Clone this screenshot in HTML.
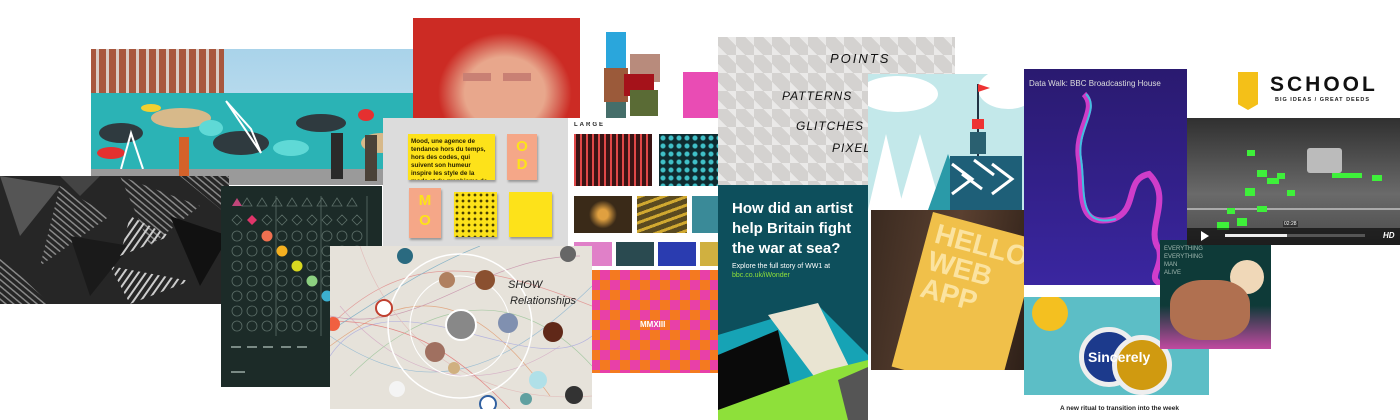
<!DOCTYPE html>
<html><head><meta charset="utf-8"><style>
*{margin:0;padding:0;box-sizing:border-box}
body{width:1400px;height:420px;background:#fff;position:relative;overflow:hidden;font-family:"Liberation Sans",sans-serif}
.a{position:absolute;overflow:hidden}
</style></head><body>

<!-- Mural -->
<div class="a" style="left:91px;top:49px;width:322px;height:136px;background:linear-gradient(#a9d3ea,#cfe6f3)">
  <div class="a" style="left:0;top:0;width:133px;height:48px;background:#a8573e;background-image:repeating-linear-gradient(90deg,transparent 0 5px,#d9cbc4 5px 8px,transparent 8px 10px),repeating-linear-gradient(0deg,transparent 0 5px,#a8573e 5px 10px)"></div>
  <div class="a" style="left:0;top:44px;width:322px;height:76px;background:#2bb3b5">
    <svg width="322" height="76">
      <ellipse cx="30" cy="40" rx="22" ry="10" fill="#2f3a3f"/><ellipse cx="90" cy="25" rx="30" ry="10" fill="#d7b98a"/>
      <ellipse cx="150" cy="50" rx="28" ry="12" fill="#2f3a3f"/><ellipse cx="230" cy="30" rx="25" ry="9" fill="#2f3a3f"/>
      <ellipse cx="290" cy="50" rx="20" ry="10" fill="#d7b98a"/><ellipse cx="20" cy="60" rx="14" ry="6" fill="#e53030"/>
      <ellipse cx="275" cy="22" rx="8" ry="6" fill="#e53030"/><ellipse cx="120" cy="35" rx="12" ry="8" fill="#5fd9d6"/>
      <ellipse cx="200" cy="55" rx="18" ry="8" fill="#5fd9d6"/><ellipse cx="60" cy="15" rx="10" ry="4" fill="#f2d030"/>
      <polyline points="135,8 170,60 160,36 135,8" stroke="#fff" fill="none" stroke-width="2"/>
      <polyline points="30,76 40,40 52,76" stroke="#fff" fill="none" stroke-width="2"/>
    </svg>
  </div>
  <div class="a" style="left:0;top:120px;width:322px;height:16px;background:#9a9a9a"></div>
  <div class="a" style="left:88px;top:88px;width:10px;height:42px;background:#d4622a"></div>
  <div class="a" style="left:240px;top:84px;width:12px;height:46px;background:#2a2a2a"></div>
  <div class="a" style="left:274px;top:86px;width:12px;height:46px;background:#4a4238"></div>
</div>

<!-- Red face -->
<div class="a" style="left:413px;top:18px;width:167px;height:100px;background:radial-gradient(ellipse 40% 60% at 55% 75%,#e8a78c 0 60%,#d86a5a 80%,#cc2b24 100%)">
  <div class="a" style="left:50px;top:55px;width:28px;height:8px;background:#c98074"></div>
  <div class="a" style="left:90px;top:55px;width:28px;height:8px;background:#c98074"></div>
</div>
<!-- SEEG letters -->
<div class="a" style="left:580px;top:18px;width:103px;height:100px;background:#fff">
  <div class="a" style="left:26px;top:14px;width:20px;height:36px;background:#2aa6dc"></div>
  <div class="a" style="left:50px;top:36px;width:30px;height:28px;background:#b88b7c"></div>
  <div class="a" style="left:24px;top:50px;width:24px;height:34px;background:#9b5a3a"></div>
  <div class="a" style="left:44px;top:56px;width:30px;height:22px;background:#a5121a"></div>
  <div class="a" style="left:50px;top:72px;width:28px;height:26px;background:#5a6b35"></div>
  <div class="a" style="left:26px;top:84px;width:20px;height:16px;background:#456e6a"></div>
</div>
<div class="a" style="left:683px;top:72px;width:35px;height:48px;background:#e94cb4"></div>

<!-- Black triangles -->
<div class="a" style="left:0;top:176px;width:229px;height:128px;background:#262626">
  <svg width="229" height="128">
    <defs><pattern id="st" width="6" height="6" patternUnits="userSpaceOnUse" patternTransform="rotate(35)"><rect width="2" height="6" fill="#ccc"/></pattern>
    <pattern id="st2" width="5" height="5" patternUnits="userSpaceOnUse" patternTransform="rotate(-50)"><rect width="1.5" height="5" fill="#888"/></pattern></defs>
    <polygon points="0,0 60,10 20,60" fill="#555"/><polygon points="60,10 110,40 40,90" fill="url(#st2)"/>
    <polygon points="120,0 200,30 150,70" fill="url(#st2)"/><polygon points="110,90 190,105 130,128" fill="url(#st)"/>
    <polygon points="170,40 229,60 200,110" fill="#111"/><polygon points="0,80 50,128 0,128" fill="url(#st2)"/>
    <polygon points="70,60 130,70 90,120" fill="#1a1a1a"/><polygon points="180,0 229,0 229,40" fill="url(#st2)"/>
    <polygon points="130,40 170,60 120,80" fill="url(#st)"/><polygon points="60,0 100,0 80,20" fill="#444"/>
  </svg>
</div>

<!-- Dark green grid -->
<div class="a" style="left:221px;top:186px;width:161px;height:201px;background:#1c2b28">
  <svg width="161" height="201">
    <g stroke="#5c6e68" fill="none" stroke-width="0.8">
      <line x1="55" y1="10" x2="55" y2="150"/><line x1="100" y1="10" x2="100" y2="150"/><line x1="146" y1="10" x2="146" y2="150"/>
    </g>
    <g fill="none" stroke="#5c6e68" stroke-width="0.8">
      <path d="M26 12l5 8h-10zM41 12l5 8h-10zM56 12l5 8h-10zM71 12l5 8h-10zM86 12l5 8h-10zM101 12l5 8h-10zM116 12l5 8h-10zM131 12l5 8h-10z"/>
      <path d="M11 34l5-5 5 5-5 5zM41 34l5-5 5 5-5 5zM56 34l5-5 5 5-5 5zM71 34l5-5 5 5-5 5zM86 34l5-5 5 5-5 5zM101 34l5-5 5 5-5 5zM116 34l5-5 5 5-5 5zM131 34l5-5 5 5-5 5z"/>
    </g>
    <g fill="none" stroke="#5c6e68" stroke-width="0.8">
      <circle cx="16" cy="50" r="5"/><circle cx="31" cy="50" r="5"/><circle cx="61" cy="50" r="5"/><circle cx="76" cy="50" r="5"/><circle cx="91" cy="50" r="5"/><circle cx="106" cy="50" r="5"/><circle cx="121" cy="50" r="5"/><circle cx="136" cy="50" r="5"/>
      <circle cx="16" cy="65" r="5"/><circle cx="31" cy="65" r="5"/><circle cx="46" cy="65" r="5"/><circle cx="76" cy="65" r="5"/><circle cx="91" cy="65" r="5"/><circle cx="106" cy="65" r="5"/><circle cx="121" cy="65" r="5"/><circle cx="136" cy="65" r="5"/>
      <circle cx="16" cy="80" r="5"/><circle cx="31" cy="80" r="5"/><circle cx="46" cy="80" r="5"/><circle cx="61" cy="80" r="5"/><circle cx="91" cy="80" r="5"/><circle cx="106" cy="80" r="5"/><circle cx="121" cy="80" r="5"/><circle cx="136" cy="80" r="5"/>
      <circle cx="16" cy="95" r="5"/><circle cx="31" cy="95" r="5"/><circle cx="46" cy="95" r="5"/><circle cx="61" cy="95" r="5"/><circle cx="76" cy="95" r="5"/><circle cx="106" cy="95" r="5"/><circle cx="121" cy="95" r="5"/><circle cx="136" cy="95" r="5"/>
      <circle cx="16" cy="110" r="5"/><circle cx="31" cy="110" r="5"/><circle cx="46" cy="110" r="5"/><circle cx="61" cy="110" r="5"/><circle cx="76" cy="110" r="5"/><circle cx="91" cy="110" r="5"/>
      <circle cx="16" cy="125" r="5"/><circle cx="31" cy="125" r="5"/><circle cx="46" cy="125" r="5"/><circle cx="61" cy="125" r="5"/><circle cx="76" cy="125" r="5"/><circle cx="91" cy="125" r="5"/>
      <circle cx="16" cy="140" r="5"/><circle cx="31" cy="140" r="5"/><circle cx="46" cy="140" r="5"/><circle cx="61" cy="140" r="5"/><circle cx="76" cy="140" r="5"/><circle cx="91" cy="140" r="5"/>
    </g>
    <path d="M16 12l5 8h-10z" fill="#c0467a"/><path d="M26 34l5-5 5 5-5 5z" fill="#e0356a"/>
    <circle cx="46" cy="50" r="5.5" fill="#f07050"/><circle cx="61" cy="65" r="5.5" fill="#f4b020"/>
    <circle cx="76" cy="80" r="5.5" fill="#d8d820"/><circle cx="91" cy="95" r="5.5" fill="#8cd080"/><circle cx="106" cy="110" r="5.5" fill="#3cb0d0"/>
    <g fill="#7a8a85"><rect x="10" y="160" width="10" height="2"/><rect x="26" y="160" width="10" height="2"/><rect x="42" y="160" width="10" height="2"/><rect x="60" y="160" width="10" height="2"/><rect x="76" y="160" width="10" height="2"/><rect x="10" y="185" width="14" height="2"/></g>
  </svg>
</div>

<!-- Mood -->
<div class="a" style="left:383px;top:118px;width:185px;height:128px;background:#dcdcdc">
  <div class="a" style="left:25px;top:16px;width:87px;height:46px;background:#fde21a;box-shadow:1px 2px 2px #999;font:bold 6.3px/8px 'Liberation Sans',sans-serif;padding:4px 3px;color:#2a2200">Mood, une agence de tendance hors du temps, hors des codes, qui suivent son humeur inspire les style de la mode et du graphisme de domain.</div>
  <div class="a" style="left:124px;top:16px;width:30px;height:46px;background:#f5a788;color:#fde21a;font:bold 15px/18px 'Liberation Sans';text-align:center;padding-top:4px;box-shadow:1px 2px 2px #999">O<br>D</div>
  <div class="a" style="left:26px;top:70px;width:32px;height:50px;background:#f5a788;color:#fde21a;font:bold 15px/20px 'Liberation Sans';text-align:center;padding-top:3px;box-shadow:1px 2px 2px #999">M<br>O</div>
  <div class="a" style="left:71px;top:74px;width:43px;height:45px;background:#fde21a;background-image:radial-gradient(circle,#4a4000 1.2px,transparent 1.6px);background-size:6px 6px;box-shadow:1px 2px 2px #999"></div>
  <div class="a" style="left:126px;top:74px;width:43px;height:45px;background:#fde21a;box-shadow:1px 2px 2px #999"></div>
</div>

<!-- LARGE -->
<div class="a" style="left:568px;top:118px;width:150px;height:152px;background:#fff">
  <div class="a" style="left:6px;top:4px;font:bold 6px 'Liberation Sans';letter-spacing:2px;color:#222">LARGE</div>
  <div class="a" style="left:6px;top:16px;width:78px;height:52px;background:#3a1414;background-image:repeating-linear-gradient(90deg,#e04848 0 2px,transparent 2px 6px)"></div>
  <div class="a" style="left:91px;top:16px;width:59px;height:52px;background:#0f2b30;background-image:radial-gradient(circle,#40c0c8 2px,transparent 3px);background-size:8px 8px"></div>
  <div class="a" style="left:6px;top:78px;width:58px;height:37px;background:radial-gradient(circle at 50% 50%,#e0a040 0 5px,#3a2a18 14px)"></div>
  <div class="a" style="left:69px;top:78px;width:50px;height:37px;background:#5a4a20;background-image:repeating-linear-gradient(160deg,#d0a830 0 3px,transparent 3px 8px)"></div>
  <div class="a" style="left:124px;top:78px;width:26px;height:37px;background:#3a8a98"></div>
  <div class="a" style="left:6px;top:124px;width:38px;height:24px;background:#e080c8"></div>
  <div class="a" style="left:48px;top:124px;width:38px;height:24px;background:#2a4a50"></div>
  <div class="a" style="left:90px;top:124px;width:38px;height:24px;background:#2a3cb0"></div>
  <div class="a" style="left:132px;top:124px;width:18px;height:24px;background:#d0b040"></div>
</div>
<!-- Pink/orange diamonds -->
<div class="a" style="left:590px;top:270px;width:128px;height:103px;background:#f47a20;background-image:linear-gradient(45deg,#e840a8 25%,transparent 25%,transparent 75%,#e840a8 75%),linear-gradient(45deg,#e840a8 25%,transparent 25%,transparent 75%,#e840a8 75%);background-size:20px 20px;background-position:0 0,10px 10px">
  <div class="a" style="left:50px;top:50px;font:bold 8px 'Liberation Sans';color:#fff">MMXIII</div>
</div>

<!-- Network -->
<div class="a" style="left:330px;top:246px;width:262px;height:163px;background:#e6e2da">
  <svg width="262" height="163">
    <g fill="none" stroke-width="0.7" opacity="0.7">
      <path d="M0 80 C80 0 160 20 262 60" stroke="#e08080"/><path d="M0 90 C100 160 180 120 262 40" stroke="#80b0d0"/>
      <path d="M10 60 C60 120 140 160 230 100" stroke="#d0a0c0"/><path d="M0 100 C80 40 140 40 220 150" stroke="#e09060"/>
      <path d="M20 130 C90 60 180 30 262 120" stroke="#90c090"/><path d="M0 70 C90 90 150 10 250 10" stroke="#c080a0"/>
      <path d="M0 110 C60 20 200 140 262 90" stroke="#a0a0e0"/><path d="M30 0 C60 90 140 160 262 150" stroke="#e0b0b0"/>
      <path d="M0 75 C70 75 120 100 180 163" stroke="#e06060"/><path d="M0 85 C70 40 100 20 150 0" stroke="#60a0c0"/>
    </g>
    <circle cx="130" cy="80" r="72" fill="none" stroke="#fff" stroke-width="1.5"/>
    <circle cx="130" cy="80" r="50" fill="none" stroke="#fff" stroke-width="1"/>
    <circle cx="75" cy="10" r="8" fill="#2a6a80"/><circle cx="238" cy="8" r="8" fill="#666"/>
    <circle cx="117" cy="34" r="8" fill="#b08060"/><circle cx="155" cy="34" r="10" fill="#8a5030"/>
    <circle cx="54" cy="62" r="8" fill="#fff" stroke="#c04030" stroke-width="2"/><circle cx="131" cy="79" r="15" fill="#888" stroke="#fff" stroke-width="2"/>
    <circle cx="178" cy="77" r="10" fill="#8090b0"/><circle cx="223" cy="86" r="10" fill="#602818"/>
    <circle cx="105" cy="106" r="10" fill="#a07060"/><circle cx="124" cy="122" r="6" fill="#d0b080"/>
    <circle cx="208" cy="134" r="9" fill="#b0e0e8"/><circle cx="67" cy="143" r="8" fill="#f4f4f4"/>
    <circle cx="196" cy="153" r="6" fill="#60a0a0"/><circle cx="244" cy="149" r="9" fill="#333"/>
    <circle cx="158" cy="158" r="8" fill="#fff" stroke="#3060a0" stroke-width="2"/><circle cx="3" cy="78" r="7" fill="#f06040"/>
    <text x="178" y="42" font-family="Liberation Sans" font-size="11" font-style="italic" fill="#222">SHOW</text>
    <text x="180" y="58" font-family="Liberation Sans" font-size="11" font-style="italic" fill="#222">Relationships</text>
  </svg>
</div>

<!-- Points patterns -->
<div class="a" style="left:718px;top:37px;width:237px;height:148px;background:#d4d2d0;background-image:linear-gradient(45deg,#eae9e8 25%,transparent 25%,transparent 75%,#eae9e8 75%);background-size:18px 18px">
  <div class="a" style="left:112px;top:14px;font:italic 13px 'Liberation Sans';letter-spacing:2px;color:#111">POINTS</div>
  <div class="a" style="left:64px;top:52px;font:italic 12px 'Liberation Sans';letter-spacing:1px;color:#111">PATTERNS</div>
  <div class="a" style="left:78px;top:82px;font:italic 12px 'Liberation Sans';letter-spacing:1px;color:#111">GLITCHES</div>
  <div class="a" style="left:114px;top:104px;font:italic 12px 'Liberation Sans';letter-spacing:1px;color:#111">PIXELS</div>
</div>

<!-- BBC -->
<div class="a" style="left:718px;top:185px;width:150px;height:235px;background:#0d4f5c">
  <svg width="150" height="235" class="a" style="left:0;top:0">
    <polygon points="0,150 100,120 150,170 150,235 0,235" fill="#16a3b5"/>
    <polygon points="50,130 100,118 140,200 110,210" fill="#e9e4d2"/>
    <polygon points="0,170 60,145 80,235 0,235" fill="#0a0a0a"/>
    <polygon points="0,235 0,225 110,185 150,175 150,235" fill="#8ee03a"/>
    <polygon points="120,195 150,182 150,235 130,235" fill="#555"/>
  </svg>
  <div class="a" style="left:14px;top:14px;width:140px;font:bold 15px/20px 'Liberation Sans';color:#fff">How did an artist help Britain fight the war at sea?</div>
  <div class="a" style="left:14px;top:77px;font:7px/9px 'Liberation Sans';color:#fff">Explore the full story of WW1 at<br><span style="color:#8ee03a">bbc.co.uk/iWonder</span></div>
</div>

<!-- Ship -->
<div class="a" style="left:868px;top:74px;width:156px;height:136px;background:#c3e8ea">
  <svg width="156" height="136">
    <ellipse cx="30" cy="20" rx="40" ry="18" fill="#fff"/><ellipse cx="140" cy="15" rx="30" ry="20" fill="#fff"/>
    <polygon points="0,136 18,60 36,136" fill="#fff"/><polygon points="30,136 52,60 74,136" fill="#fff"/>
    <polygon points="60,136 80,80 100,136" fill="#2a9aa8"/>
    <line x1="110" y1="10" x2="110" y2="110" stroke="#234" stroke-width="2"/>
    <polygon points="110,10 122,14 110,18" fill="#e33"/>
    <rect x="104" y="45" width="12" height="10" fill="#e33"/><rect x="102" y="58" width="16" height="22" fill="#2a6070"/>
    <rect x="82" y="82" width="72" height="54" fill="#1e5f78"/>
    <path d="M84 90l20 15-20 15M124 90l20 15-20 15M94 100l20 15M106 86l20 15" stroke="#fff" stroke-width="3" fill="none"/>
  </svg>
</div>

<!-- Hello Web App -->
<div class="a" style="left:871px;top:210px;width:153px;height:160px;background:linear-gradient(100deg,#3a2a20,#5a4030,#2e2018)">
  <div class="a" style="width:110px;height:160px;background:#f0c04a;transform:rotate(15deg);transform-origin:0 0;left:62px;top:2px">
    <div style="font:bold 28px/28px 'Liberation Sans';color:#fbe3a0;padding:6px 8px">HELLO<br>WEB<br>APP</div>
  </div>
</div>

<!-- Data walk -->
<div class="a" style="left:1024px;top:69px;width:163px;height:216px;background:linear-gradient(#2a1a70,#3a26a0)">
  <div class="a" style="left:5px;top:10px;font:8px 'Liberation Sans';color:#ddd;white-space:nowrap">Data Walk: BBC Broadcasting House</div>
  <svg width="163" height="216" class="a" style="left:0;top:0">
    <path d="M60 25 C75 40 50 60 55 90 C60 120 50 160 90 150 C115 140 100 110 125 105 C150 130 120 160 135 180 C140 200 120 210 140 216" stroke="#e040d0" stroke-width="6" fill="none" opacity="0.9"/>
    <path d="M62 25 C77 40 52 60 57 90 C62 120 52 160 92 150" stroke="#40c0e0" stroke-width="2" fill="none"/>
  </svg>
</div>
<!-- Sincerely -->
<div class="a" style="left:1024px;top:285px;width:185px;height:110px;background:#fff">
  <div class="a" style="left:0;top:12px;width:185px;height:98px;background:#5cbec6">
    <div class="a" style="left:8px;top:-2px;width:36px;height:36px;border-radius:50%;background:#f4c020"></div>
    <div class="a" style="left:55px;top:30px;width:60px;height:60px;border-radius:50%;background:#1c3a8c;border:5px solid #eee"></div>
    <div class="a" style="left:88px;top:38px;width:60px;height:60px;border-radius:50%;background:#d09a10;border:5px solid #eee"></div>
    <div class="a" style="left:64px;top:52px;font:bold 14px 'Liberation Sans';color:#fff">Sincerely</div>
  </div>
</div>
<div class="a" style="left:1060px;top:405px;font:bold 6.5px 'Liberation Sans';color:#222;white-space:nowrap">A new ritual to transition into the week</div>

<!-- Fox -->
<div class="a" style="left:1160px;top:240px;width:111px;height:109px;background:linear-gradient(#0e3a38 0 60%,#c04aa0)">
  <div class="a" style="left:70px;top:20px;width:34px;height:34px;border-radius:50%;background:#f0d8b8"></div>
  <div class="a" style="left:10px;top:40px;width:80px;height:60px;border-radius:40%;background:#b07050"></div>
  <div class="a" style="left:4px;top:5px;font:6px/8px 'Liberation Sans';color:#a0b8b0">EVERYTHING<br>EVERYTHING<br>MAN<br>ALIVE</div>
</div>

<!-- School logo -->
<div class="a" style="left:1238px;top:72px;width:20px;height:38px;background:#f4c018;clip-path:polygon(0 0,100% 0,100% 85%,50% 100%,0 85%)"></div>
<div class="a" style="left:1270px;top:73px;font:bold 21px 'Liberation Sans';letter-spacing:3px;color:#111">SCHOOL</div>
<div class="a" style="left:1275px;top:97px;font:bold 5.5px 'Liberation Sans';letter-spacing:1px;color:#222">BIG IDEAS / GREAT DEEDS</div>

<!-- Car video -->
<div class="a" style="left:1187px;top:118px;width:213px;height:127px;background:linear-gradient(#303030,#6a6a6a 60%,#4a4a4a)">
  <div class="a" style="left:120px;top:30px;width:35px;height:25px;background:#bbb;border-radius:3px"></div>
  <div class="a" style="left:0;top:90px;width:213px;height:2px;background:#aaa"></div>
  <svg width="213" height="127" class="a" style="left:0;top:0"><g fill="#3ef03a">
    <rect x="60" y="32" width="8" height="6"/><rect x="70" y="52" width="10" height="7"/><rect x="80" y="60" width="12" height="6"/>
    <rect x="58" y="70" width="10" height="8"/><rect x="90" y="55" width="8" height="6"/><rect x="145" y="55" width="30" height="5"/>
    <rect x="185" y="57" width="10" height="6"/><rect x="50" y="100" width="10" height="8"/><rect x="40" y="90" width="8" height="6"/>
    <rect x="70" y="88" width="10" height="6"/><rect x="30" y="104" width="12" height="8"/><rect x="100" y="72" width="8" height="6"/></g></svg>
  <div class="a" style="left:0;top:110px;width:213px;height:17px;background:rgba(0,0,0,0.6)"></div>
  <div class="a" style="left:14px;top:113px;width:0;height:0;border-left:8px solid #fff;border-top:5px solid transparent;border-bottom:5px solid transparent"></div>
  <div class="a" style="left:38px;top:116px;width:140px;height:3px;background:#555"></div>
  <div class="a" style="left:38px;top:116px;width:62px;height:3px;background:#eee"></div>
  <div class="a" style="left:96px;top:103px;font:5px 'Liberation Sans';color:#fff;background:#333;padding:0 1px">02:28</div>
  <div class="a" style="left:196px;top:113px;font:bold italic 8px 'Liberation Sans';color:#fff">HD</div>
</div>

</body></html>
